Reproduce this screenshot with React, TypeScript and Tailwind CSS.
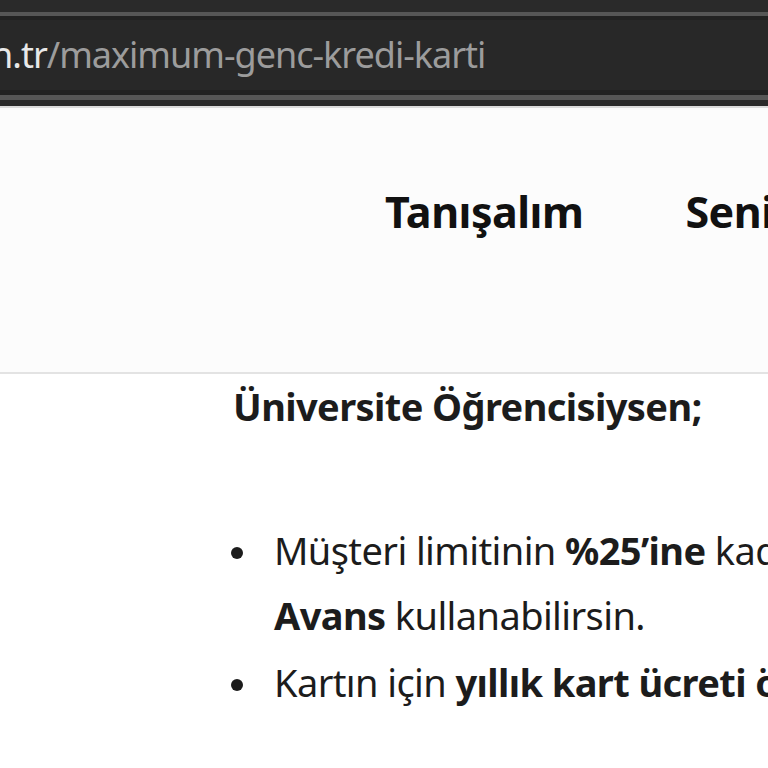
const bullets = [
  {
    id: "1",
    lines: [
      <>
        Müşteri limitinin <b className="font-bold">%25’ine</b> kadar Nakit
      </>,
      <>
        <b className="font-bold">Avans</b> kullanabilirsin.
      </>,
    ],
  },
  {
    id: "2",
    lines: [
      <>
        Kartın için <b className="font-bold">yıllık kart ücreti ödemezsin.</b>
      </>,
    ],
  },
];

export default function App() {
  return (
    <main className="h-[768px] w-[768px] overflow-hidden bg-white font-['Noto_Sans',sans-serif]">
      {/* browser chrome */}
      <div className="bg-[#2a2a2a] pt-[12px]">
        <div className="h-[4px] bg-[#565656]" />
        <div className="flex h-[79px] items-center border-t-[4px] border-b-[5px] border-[#222] bg-[#282828]">
          <p className="-ml-[9px] whitespace-nowrap text-[36px] leading-none tracking-[-1px]">
            <span className="text-[#e8e8e8]">n.tr</span>
            <span className="text-[#9c9c9c]">/maximum-genc-kredi-karti</span>
          </p>
        </div>
        <div className="h-[5px] bg-[#565656]" />
        <div className="h-[6px] bg-[#2a2a2a]" />
      </div>

      {/* site header */}
      <header className="h-[268px] border-t-2 border-b-2 border-t-[#dcdcdc] border-b-[#e3e3e3] bg-[#fcfcfc] pl-[385px] pt-[82px]">
        <nav className="flex gap-[102px] whitespace-nowrap text-[43px] font-bold leading-none tracking-[-0.5px] text-[#111]">
          <span>Tanışalım</span>
          <span>Seninle</span>
        </nav>
      </header>

      {/* content */}
      <section className="pl-[233px] text-[#1c1c1c]">
        <h2 className="mt-[13px] whitespace-nowrap text-[38px] font-bold leading-none tracking-[-0.6px]">
          Üniversite Öğrencisiysen;
        </h2>
        <ul className="mt-[93px] space-y-[2px]">
          {bullets.map((b) => (
            <li key={b.id} className="flex whitespace-nowrap text-[38px] leading-[65px] tracking-[-0.6px]">
              <span className="w-[41px] shrink-0">
                <span className="-ml-[2px] mt-[29px] block h-[12px] w-[12px] rounded-full bg-[#1c1c1c]" />
              </span>
              <div>
                {b.lines.map((l, i) => (
                  <p key={i}>{l}</p>
                ))}
              </div>
            </li>
          ))}
        </ul>
      </section>
    </main>
  );
}
